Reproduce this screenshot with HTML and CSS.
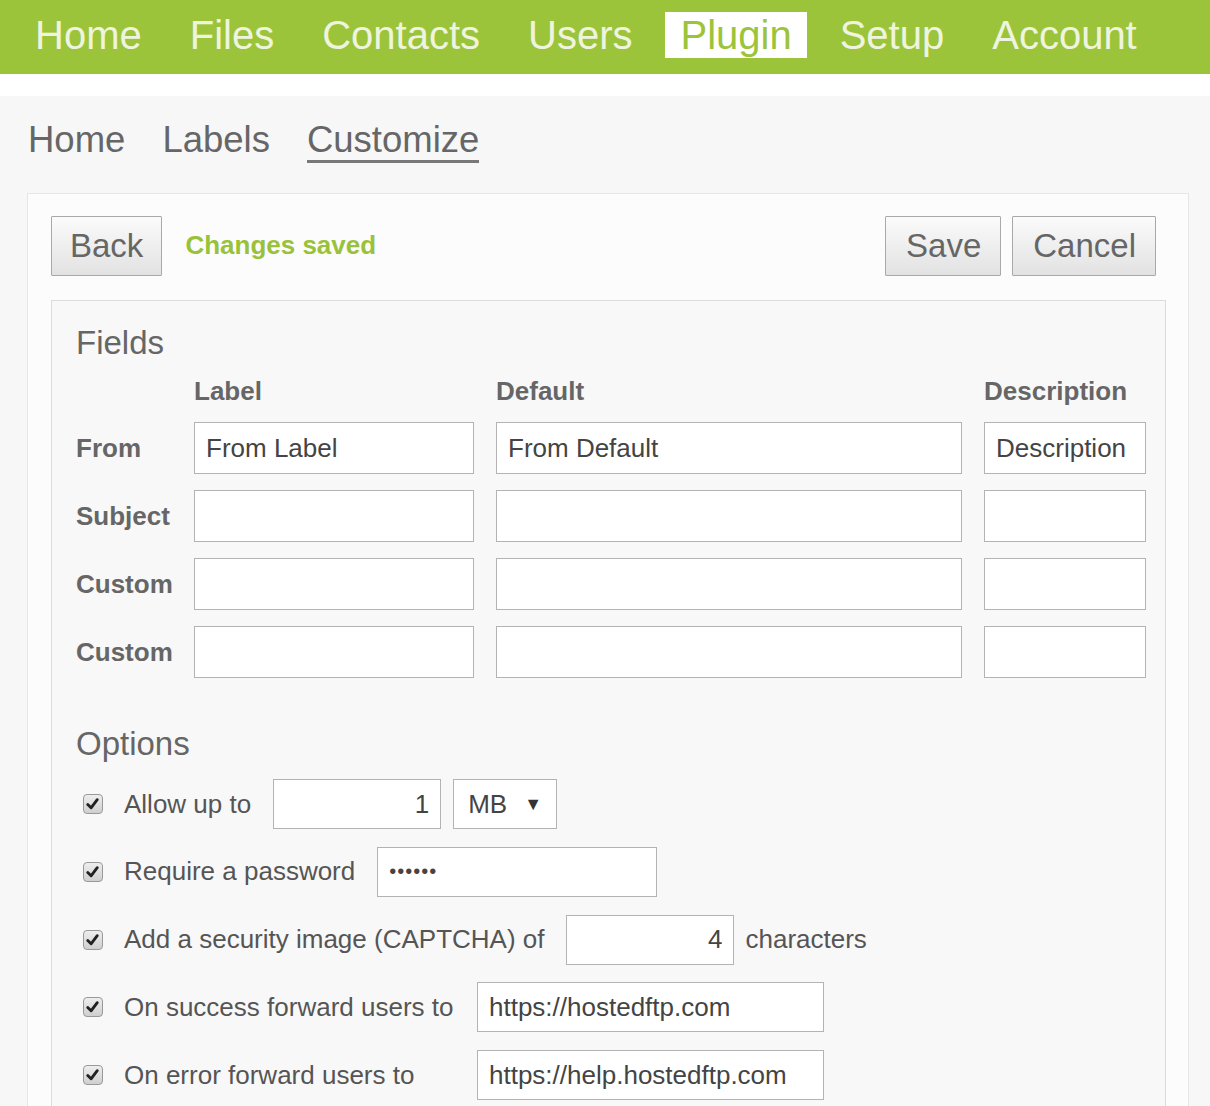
FILE: index.html
```html
<!DOCTYPE html>
<html>
<head>
  <meta charset="utf-8">
  <title>Plugin - Customize</title>
  <link rel="stylesheet" href="styles.css">
</head>
<body>
  <nav class="topnav">
    <a href="#">Home</a>
    <a href="#">Files</a>
    <a href="#">Contacts</a>
    <a href="#">Users</a>
    <a href="#" class="active">Plugin</a>
    <a href="#">Setup</a>
    <a href="#">Account</a>
  </nav>

  <main class="page">
    <nav class="subnav">
      <a href="#">Home</a>
      <a href="#">Labels</a>
      <a href="#" class="active">Customize</a>
    </nav>

    <section class="panel">
      <div class="toolbar">
        <button class="btn">Back</button>
        <span class="status">Changes saved</span>
        <div class="toolbar-right">
          <button class="btn">Save</button>
          <button class="btn">Cancel</button>
        </div>
      </div>

      <div class="box">
        <h2>Fields</h2>
        <div class="fields">
          <span></span>
          <span class="colhead">Label</span>
          <span class="colhead">Default</span>
          <span class="colhead">Description</span>

          <span class="rowhead">From</span>
          <input class="field" value="From Label">
          <input class="field" value="From Default">
          <input class="field" value="Description">

          <span class="rowhead">Subject</span>
          <input class="field">
          <input class="field">
          <input class="field">

          <span class="rowhead">Custom</span>
          <input class="field">
          <input class="field">
          <input class="field">

          <span class="rowhead">Custom</span>
          <input class="field">
          <input class="field">
          <input class="field">
        </div>

        <h2 class="options-title">Options</h2>
        <div class="options">
          <div class="opt">
            <span class="check"><svg viewBox="0 0 20 20" width="20" height="20"><path d="M5 10.5 L8.5 14 L15 5.5" fill="none" stroke="#222" stroke-width="3" stroke-linecap="round" stroke-linejoin="round"/></svg></span>
            <span class="opt-label">Allow up to</span>
            <input class="field num w-size" value="1">
            <span class="select">MB <span class="arrow">&#9660;</span></span>
          </div>
          <div class="opt">
            <span class="check"><svg viewBox="0 0 20 20" width="20" height="20"><path d="M5 10.5 L8.5 14 L15 5.5" fill="none" stroke="#222" stroke-width="3" stroke-linecap="round" stroke-linejoin="round"/></svg></span>
            <span class="opt-label">Require a password</span>
            <input class="field pass w-pass" type="password" value="secret">
          </div>
          <div class="opt">
            <span class="check"><svg viewBox="0 0 20 20" width="20" height="20"><path d="M5 10.5 L8.5 14 L15 5.5" fill="none" stroke="#222" stroke-width="3" stroke-linecap="round" stroke-linejoin="round"/></svg></span>
            <span class="opt-label">Add a security image (CAPTCHA) of</span>
            <input class="field num w-size" value="4">
            <span class="opt-after">characters</span>
          </div>
          <div class="opt">
            <span class="check"><svg viewBox="0 0 20 20" width="20" height="20"><path d="M5 10.5 L8.5 14 L15 5.5" fill="none" stroke="#222" stroke-width="3" stroke-linecap="round" stroke-linejoin="round"/></svg></span>
            <span class="opt-label wide">On success forward users to</span>
            <input class="field w-url" value="https://hostedftp.com">
          </div>
          <div class="opt">
            <span class="check"><svg viewBox="0 0 20 20" width="20" height="20"><path d="M5 10.5 L8.5 14 L15 5.5" fill="none" stroke="#222" stroke-width="3" stroke-linecap="round" stroke-linejoin="round"/></svg></span>
            <span class="opt-label wide">On error forward users to</span>
            <input class="field w-url" value="https://help.hostedftp.com">
          </div>
        </div>
      </div>
    </section>
  </main>
</body>
</html>
```

FILE: styles.css
```css
body {
  margin: 0;
  background: #fff;
  font-family: "Liberation Sans", Arial, sans-serif;
  color: #555;
}
a {
  text-decoration: none;
  color: inherit;
}

.topnav {
  display: flex;
  align-items: flex-start;
  gap: 18px;
  height: 74px;
  box-sizing: border-box;
  padding: 12px 20px 0;
  background: #9cc43b;
}
.topnav a {
  padding: 0 15px;
  font-size: 40px;
  line-height: 46px;
  color: #eff4df;
}
.topnav a.active {
  background: #fff;
  color: #9cc43b;
}

.page {
  margin-top: 22px;
  padding: 24px 21px 0 27px;
  background: #f7f7f7;
  min-height: 1000px;
}

.subnav {
  display: flex;
  gap: 37px;
  padding-left: 1px;
}
.subnav a {
  font-size: 36.5px;
  line-height: 40px;
  color: #666;
  border-bottom: 3px solid transparent;
}
.subnav a.active {
  border-bottom-color: #787878;
}

.panel {
  margin-top: 30px;
  border: 1px solid #e6e6e6;
  background: #fcfcfc;
  padding: 22px 22px 30px 23px;
}

.toolbar {
  display: flex;
  align-items: center;
}
.btn {
  font-family: inherit;
  font-size: 33px;
  line-height: 38px;
  padding: 10px 18px;
  color: #666;
  border: 1px solid #a9a9a9;
  border-radius: 1px;
  background: linear-gradient(#fbfbfb, #e2e2e2);
}
.status {
  margin-left: 23px;
  margin-top: -2px;
  font-size: 26px;
  font-weight: bold;
  color: #99c23a;
}
.toolbar-right {
  margin-left: auto;
  margin-right: 10px;
  display: flex;
  gap: 11px;
}
.toolbar-right .btn {
  padding: 10px 19px 10px 20px;
}

.box {
  margin-top: 24px;
  border: 1px solid #dcdcdc;
  background: #f8f8f8;
  padding: 23px 19px 30px 24px;
}
.box h2 {
  margin: 0;
  font-size: 33px;
  line-height: 38px;
  font-weight: normal;
  color: #666;
}

.fields {
  margin-top: 14px;
  display: grid;
  grid-template-columns: 96px 280px 466px 162px;
  grid-template-rows: 30px repeat(4, 52px);
  column-gap: 22px;
  row-gap: 16px;
  align-items: center;
}
.colhead,
.rowhead {
  font-size: 26px;
  font-weight: bold;
  color: #666;
}

.field {
  box-sizing: border-box;
  height: 52px;
  margin: 0;
  padding: 0 11px;
  border: 1px solid #b3b3b3;
  border-radius: 0;
  background: #fff;
  font-family: inherit;
  font-size: 26px;
  color: #444;
  outline: none;
}
.fields .field {
  width: 100%;
}

.options-title {
  margin-top: 47px !important;
}
.options {
  margin-top: 16px;
  display: flex;
  flex-direction: column;
  gap: 17.75px;
}
.opt {
  display: flex;
  align-items: center;
  height: 50px;
}
.opt .field {
  height: 50px;
}
.check {
  display: flex;
  width: 20px;
  height: 20px;
  box-sizing: border-box;
  margin-left: 7px;
  border: 1px solid #999;
  border-radius: 4px;
  background: linear-gradient(#eeeeee, #cfcfcf);
  overflow: hidden;
}
.check svg {
  margin: -1px 0 0 -1px;
}
.opt-label {
  margin-left: 21px;
  margin-right: 22px;
  font-size: 26px;
  color: #555;
}
.opt-label.wide {
  width: 331px;
}
.num {
  text-align: right;
}
.pass {
  font-size: 20px;
  letter-spacing: 1px;
}
.w-size { width: 168px; }
.w-pass { width: 280px; }
.w-url { width: 347px; }

.select {
  display: flex;
  align-items: center;
  justify-content: space-between;
  box-sizing: border-box;
  width: 104px;
  height: 50px;
  margin-left: 12px;
  padding: 0 14px 0 14px;
  border: 1px solid #b3b3b3;
  background: #fff;
  font-size: 26px;
  color: #444;
}
.arrow {
  font-size: 18px;
  color: #333;
}
.opt-after {
  margin-left: 11px;
  font-size: 26px;
  color: #555;
}
```
